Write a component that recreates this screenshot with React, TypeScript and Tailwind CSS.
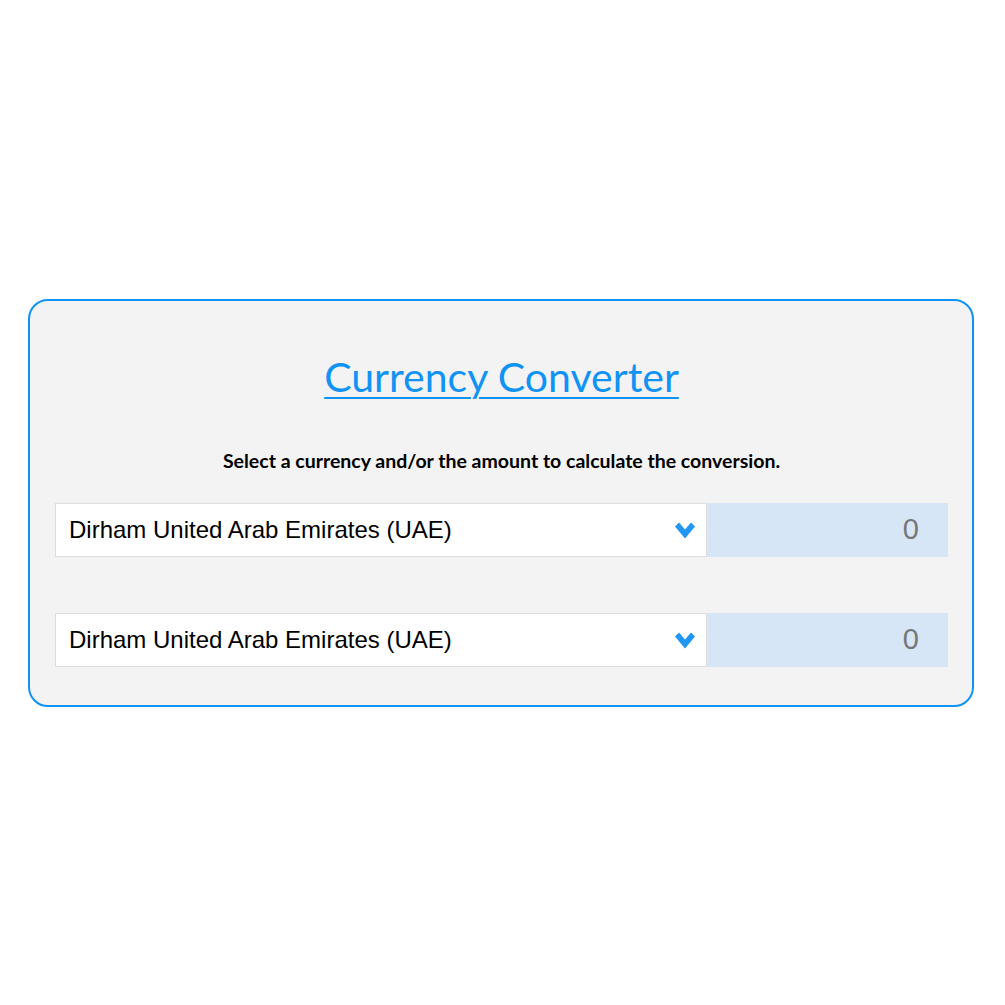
function Chevron() {
  return (
    <svg viewBox="0 0 20 17" className="h-[17px] w-[20px]" fill="#2196f3">
      <polygon points="0,4.5 4,0.5 10,7.5 16,0.5 20,4.5 10,16.5" />
    </svg>
  );
}

function CurrencyRow() {
  return (
    <div className="flex h-[54px]">
      <div className="flex flex-1 items-center justify-between border border-[#dddddd] bg-white pl-[13px] pr-[11px]">
        <span className="text-[24px] text-black" style={{ fontFamily: '"Liberation Sans", Arial, sans-serif' }}>
          Dirham United Arab Emirates (UAE)
        </span>
        <Chevron />
      </div>
      <div
        className="flex w-[241px] items-center justify-end bg-[#d6e6f7] pr-[29px] text-[29px] text-[#777777]"
        style={{ fontFamily: '"Liberation Sans", Arial, sans-serif' }}
      >
        0
      </div>
    </div>
  );
}

export default function App() {
  return (
    <div className="flex h-[1005px] w-[1005px] items-center bg-white" style={{ fontFamily: "Lato, sans-serif" }}>
      <div className="ml-[28px] flex h-[408px] w-[946px] flex-col rounded-[20px] border-2 border-[#1193f5] bg-[#f3f3f3] pl-[25px] pr-[24px]">
        <h1 className="mt-[55px] text-center text-[41px] leading-none text-[#1193f5] underline decoration-2 underline-offset-[5px]">
          Currency Converter
        </h1>
        <p className="mt-[54px] text-center text-[19.5px] font-bold leading-none text-black">
          Select a currency and/or the amount to calculate the conversion.
        </p>
        <div className="mt-[33px] flex flex-col gap-[56px]">
          <CurrencyRow />
          <CurrencyRow />
        </div>
      </div>
    </div>
  );
}
